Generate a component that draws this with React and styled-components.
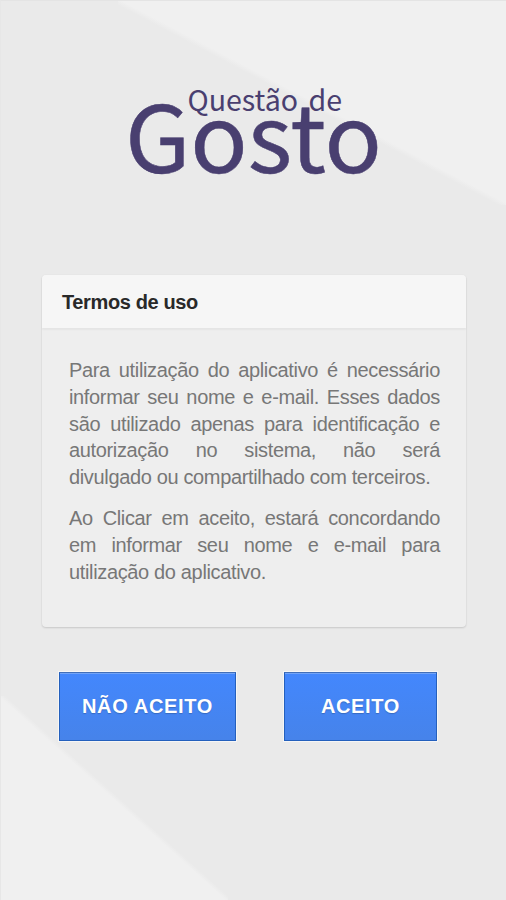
import React from 'react'
import styled, { createGlobalStyle } from 'styled-components'

const App = () => (
  <Screen>
    <GlobalStyle />
    <Logo viewBox="0 0 506 120" role="img" aria-label="Questão de Gosto">
      <LogoText x="187.5" y="27.7" size={28.5} textLength="154.5" lengthAdjust="spacingAndGlyphs">
        Questão de
      </LogoText>
      <LogoText x="125" y="90" size={93} textLength="257" lengthAdjust="spacingAndGlyphs" big>
        Gosto
      </LogoText>
    </Logo>
    <Card>
      <CardHeader>Termos de uso</CardHeader>
      <CardBody>
        <Paragraph>
          Para utilização do aplicativo é necessário informar seu nome e e-mail. Esses dados são utilizado apenas para
          identificação e autorização no sistema, não será divulgado&nbsp;ou compartilhado com terceiros.
        </Paragraph>
        <Paragraph>
          Ao Clicar em aceito, estará concordando em informar seu nome e e-mail para utilização do aplicativo.
        </Paragraph>
      </CardBody>
    </Card>
    <Actions>
      <Button width={177}>NÃO ACEITO</Button>
      <Button width={153}>ACEITO</Button>
    </Actions>
  </Screen>
)

const GlobalStyle = createGlobalStyle`
  * {
    box-sizing: border-box;
  }

  body {
    margin: 0;
    font-family: 'Liberation Sans', Arial, sans-serif;
  }
`

const Screen = styled.main`
  width: 506px;
  height: 900px;
  padding-top: 82px;
  overflow: hidden;
  border-top: 1px solid #e4e4e4;
  border-left: 1px solid #e7e7e7;
  background:
    linear-gradient(to top right, #f0f0f0 49.5%, transparent 51%) left bottom / 227px 204px no-repeat,
    linear-gradient(to bottom left, #f0f0f0 49.5%, transparent 51%) right top / 388px 204px no-repeat,
    #eaeaea;
`

const Logo = styled.svg`
  display: block;
  width: 506px;
  height: 120px;
  margin-left: -1px;
  overflow: visible;
`

const LogoText = styled.text.withConfig({
  shouldForwardProp: prop => !['size', 'big'].includes(prop)
})`
  font-family: 'Noto Sans CJK JP', 'Noto Sans', sans-serif;
  font-size: ${props => props.size}px;
  word-spacing: ${props => (props.big ? 0 : 4)}px;
  fill: #493f70;
  stroke: #493f70;
  stroke-width: ${props => (props.big ? 0.5 : 0)};
`

const Card = styled.section`
  width: 424px;
  height: 352px;
  margin: 72px 0 0 41px;
  border-radius: 4px;
  background: #eee;
  box-shadow: 0 1px 2px rgba(0, 0, 0, 0.14), 0 0 2px rgba(0, 0, 0, 0.04);
`

const CardHeader = styled.h1`
  height: 53px;
  margin: 0;
  padding-left: 20px;
  border-radius: 4px 4px 0 0;
  background: #f6f6f6;
  box-shadow: 0 2px 2px rgba(0, 0, 0, 0.04);
  color: #292929;
  font-size: 20px;
  font-weight: bold;
  letter-spacing: -0.38px;
  line-height: 54px;
`

const CardBody = styled.div`
  padding: 29px 26px 0 27px;
`

const Paragraph = styled.p`
  margin: 0 0 14px;
  color: #777;
  font-size: 20px;
  letter-spacing: -0.35px;
  line-height: 26.8px;
  text-align: justify;
`

const Actions = styled.div`
  display: flex;
  gap: 48px;
  margin: 45px 0 0 58px;
`

const Button = styled.button.withConfig({ shouldForwardProp: prop => prop !== 'width' })`
  width: ${props => props.width}px;
  height: 69px;
  padding: 0;
  border: 1px solid #2460bd;
  border-top-color: #416fb9;
  background: linear-gradient(#4387fd, #4683ea);
  box-shadow: 0 0 0 1px #f6f6f6, inset 0 1px 0 #72a4f8;
  color: #fff;
  font-family: inherit;
  font-size: 20px;
  font-weight: bold;
  letter-spacing: 0.65px;
  text-shadow: 0 1px 1px rgba(0, 0, 0, 0.2);
`

export default App
